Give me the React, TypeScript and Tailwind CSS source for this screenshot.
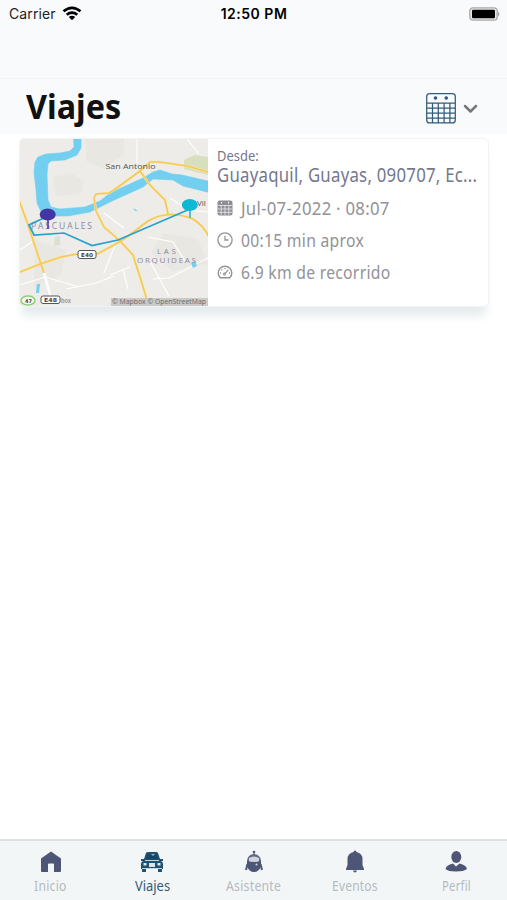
import { useLayoutEffect, useRef, useState } from "react";
import type { ReactNode } from "react";

// Condenses a line of text horizontally so that it occupies the given width.
function Fit({ width, className = "", children }: { width: number; className?: string; children: ReactNode }) {
  const ref = useRef<HTMLSpanElement>(null);
  const [scale, setScale] = useState(0.85);
  useLayoutEffect(() => {
    if (ref.current) setScale(width / ref.current.offsetWidth);
  }, [width]);
  return (
    <span className={`block shrink-0 whitespace-nowrap ${className}`} style={{ width }}>
      <span ref={ref} className="inline-block origin-left" style={{ transform: `scaleX(${scale})` }}>{children}</span>
    </span>
  );
}

function TripMap() {
  return (
    <svg viewBox="20 139 188 167" className="block h-[167px] w-[188px] shrink-0 rounded-l-[3px]">
      <rect x="20" y="139" width="188" height="167" fill="#edece8" />
      <g fill="#e9e7e2">
        <path d="M53 176l18-3 13 8-3 13-25 2zM86 139h38v15l-20 15-18-8zM163 233l35 6 10 25-35 7-22-18zM35 240l31 10-5 25-27 12z" />
      </g>
      <path d="M184 160l11-5 13 2v18l-24-6z" fill="#d8dfbd" />
      <path d="M55 237l5-1v9l-6 1z" fill="#dedfce" />
      <g fill="none" stroke="#fff" strokeWidth="1.1">
        <path d="M137 139v24M20 250l12-8M66 289l30-6 18-7M20 285l25-8 34 10M110 275l20-8M123 269l5 20M153 279l16-1 39-20M148 237l25 5 12 19M151 263l18 33M116 243l-12 30M170 198l18 12 20 2M104 213l20 15M187 139l12 15" />
      </g>
      <path
        d="M73.5 139L74 147L70 151L60 153L46 154L38 157L35 162L34 172L36 190L37 203L41 212L48 216L68 216L90 212L110 202L143 187L153 179L173 180L183 186L207 192H208V181L182 175L172 174L160 170L153 172L143 178L110 193L100 201L85 207L60 209L51 207L48 200L47 175L48 164L51 161L65 160L77 155L81 148V139Z"
        fill="#73cff0"
        stroke="#73cff0"
        strokeWidth=".6"
      />
      <path d="M37 284h3l-1 9h-3zM191 263l4-2 2 5-4 2zM133 208l5 3-3 0z" fill="#73cff0" />
      <path d="M44 273L51 298" stroke="#fff" strokeWidth="2.5" />
      <g fill="none" strokeLinejoin="round">
        <g stroke="#f8e7b0" strokeWidth="2.6">
          <path d="M19 200L27 222L44 273M20 272L40 264L61 257L77 254H97L114 245L127 237L148 221Q168 209 193 219Q204 226 209 237" />
          <path d="M208 172L187 166L160 162H150L140 171L114 190L109 193L96 194L94 198L96 211L104 227L120 241L133 255L140 277L147 300M140 171L150 185L165 200L168 214" />
        </g>
        <g stroke="#f5c954" strokeWidth="1.6">
          <path d="M19 200L27 222L44 273M20 272L40 264L61 257L77 254H97L114 245L127 237L148 221Q168 209 193 219Q204 226 209 237" />
          <path d="M208 172L187 166L160 162H150L140 171L114 190L109 193L96 194L94 198L96 211L104 227L120 241L133 255L140 277L147 300M140 171L150 185L165 200L168 214" />
        </g>
      </g>
      <g className="font-['Open_Sans',sans-serif] font-medium">
        <text x="105.500" y="169" fontSize="7.5" fill="#555" textLength="50" lengthAdjust="spacingAndGlyphs">San Antonio</text>
        <text x="31" y="229" fontSize="8.500" fill="#8a86a8" textLength="61">PASCUALES</text>
        <text x="157" y="254" fontSize="8" fill="#8a86a8" textLength="19">LAS</text>
        <text x="137" y="262.500" fontSize="8" fill="#8a86a8" textLength="59">ORQUIDEAS</text>
        <text x="197" y="206" fontSize="8" fill="#555">Vil</text>
      </g>
      <path d="M48 216L29 225L34 235L64 233L92 245.5L118 240L190 209" fill="none" stroke="#27a1ce" strokeWidth="1.7" />
      <path d="M48 218v11" stroke="#4934a1" strokeWidth="1.5" />
      <ellipse cx="47.7" cy="214.5" rx="8" ry="6" fill="#4435a5" />
      <path d="M190 209v9" stroke="#31b1c7" strokeWidth="1.5" />
      <ellipse cx="189.8" cy="205" rx="8" ry="6" fill="#11b8d3" />
      <g fill="#fff" stroke="#555" strokeWidth="1">
        <rect x="78" y="250.5" width="18" height="8" rx="2" />
        <rect x="41" y="296" width="19" height="7.5" rx="2" />
      </g>
      <ellipse cx="28" cy="300.5" rx="7" ry="4.5" fill="#f5faf1" stroke="#8ecf78" strokeWidth="1.5" />
      <g className="font-['DejaVu_Sans',sans-serif] font-bold" fontSize="5.5" fill="#444">
        <text x="81" y="256.7" textLength="12" lengthAdjust="spacingAndGlyphs">E40</text>
        <text x="44" y="302" textLength="13" lengthAdjust="spacingAndGlyphs">E48</text>
        <text x="25" y="302.5" fontSize="5">47</text>
      </g>
      <text x="61" y="302.5" fontSize="6" fill="#999" textLength="10" lengthAdjust="spacingAndGlyphs" className="font-['Inter',sans-serif] font-bold">box</text>
      <rect x="111" y="298" width="97" height="8" fill="#cbcac7" />
      <text x="112" y="304.4" fontSize="7" fill="#686868" textLength="94" lengthAdjust="spacingAndGlyphs" className="font-['Open_Sans',sans-serif]">© Mapbox © OpenStreetMap</text>
    </svg>
  );
}

function CalendarIcon() {
  return (
    <svg viewBox="0 0 30 31" className="h-[31px] w-[30px]" fill="none" stroke="#315c78" strokeWidth="1.25">
      <rect x=".7" y=".7" width="28.6" height="29.2" rx="3" />
      <path d="M1 10h28M1 15h28M1 20h28M1 25h28M6.5 10v20M12.3 10v20M18.1 10v20M23.9 10v20" />
      <circle cx="9.5" cy="5" r="1.2" fill="#315c78" />
      <circle cx="20.2" cy="5" r="1.2" fill="#315c78" />
    </svg>
  );
}

function Detail({ icon, children, width }: { icon: ReactNode; children: ReactNode; width: number }) {
  return (
    <div className="flex h-8 items-center text-[#929297]">
      <svg viewBox="0 0 16 16" className="h-4 w-4 shrink-0" fill="none" stroke="currentColor">{icon}</svg>
      <Fit width={width} className="ml-2 text-[17.5px] leading-5 tracking-[0.3px]">{children}</Fit>
    </div>
  );
}

function Tab({ label, icon, active = false, width }: { label: string; icon: ReactNode; active?: boolean; width: number }) {
  return (
    <div className={`flex flex-1 flex-col items-center pt-2 ${active ? "text-[#315b76]" : "text-[#b3bac0]"}`}>
      <svg viewBox="0 0 28 26" className="h-[26px] w-7">{icon}</svg>
      <Fit width={width} className={`mt-px text-[14px] leading-5 ${active ? "" : "tracking-[0.3px]"}`}>{label}</Fit>
    </div>
  );
}

export default function App() {
  return (
    <main className="flex h-[900px] w-[507px] flex-col overflow-hidden bg-white font-['Noto_Sans',sans-serif]">
      <header className="bg-[#f9fafc]">
        <div className="grid h-[79px] grid-cols-3 items-start border-b border-[#f1f3f5] pl-2 pr-[7px] pt-1 font-['Inter',sans-serif] text-[14px] leading-5 text-[#222]">
          <div className="flex items-center gap-[6px] pl-px">
            <span className="tracking-[0.1px]">Carrier</span>
            <svg viewBox="0 0 20 15" className="-mt-0.5 h-[15px] w-5" fill="none" stroke="#000" strokeWidth="2.7">
              <path d="M1.5 5.3Q10-1.7 18.5 5.3M4.7 8.7Q10 4.5 15.3 8.7" />
              <path d="M6.8 11Q10 8.6 13.2 11L10 14.3z" fill="#000" stroke="none" />
            </svg>
          </div>
          <span className="text-center font-semibold tracking-[0.5px] text-black">12:50 PM</span>
          <div className="flex h-[19px] items-center justify-end">
            <svg viewBox="0 0 31 14" className="h-[14px] w-[31px]">
              <rect x=".8" y=".8" width="27.4" height="12.4" rx="3.2" fill="#e7e7e7" stroke="#aaa" strokeWidth="1.3" />
              <rect x="3" y="2.7" width="23" height="8.6" rx="1.3" />
              <path d="M29 4.5Q32 7 29 9.5z" fill="#aaa" />
            </svg>
          </div>
        </div>
        <div className="flex h-[55px] items-center justify-between pl-[26px] pr-[29px]">
          <h1 className="pb-0.5 text-[34px] font-bold leading-[50px] text-[#111]"><Fit width={95}>Viajes</Fit></h1>
          <div className="flex items-center gap-[7px] pt-1">
            <CalendarIcon />
            <svg viewBox="0 0 15 10" className="h-[10px] w-[15px]" fill="none" stroke="#77777b" strokeWidth="2.5" strokeLinecap="round" strokeLinejoin="round"><path d="M2 2l5.5 5.5L13 2" /></svg>
          </div>
        </div>
      </header>
      <section className="flex-1 pl-[19px] pr-[18px] pt-1">
        <article className="flex h-[169px] rounded-[5px] border border-[#f0f2f4] bg-white shadow-[0_12px_10px_-3px_#e5ecee]">
          <TripMap />
          <div className="min-w-0 flex-1 pl-[9px] pt-[7px]">
            <p className="text-[14.5px] leading-[18px] text-[#74778e]"><Fit width={42}>Desde:</Fit></p>
            <p className="mb-[6px] text-[19px] leading-[22px] tracking-[0.3px] text-[#74778e]"><Fit width={260}>Guayaquil, Guayas, 090707, Ec...</Fit></p>
            <Detail width={149} icon={<><rect x=".5" y=".5" width="15" height="15" rx="2" fill="#8e8e93" stroke="none" /><path d="M1 5.5h14M1 9h14M1 12.3h14M4.2 5v10M8 5v10M11.8 5v10" stroke="#ececef" strokeWidth=".8" /><path d="M4.5 2v1.5M11.5 2v1.5" stroke="white" /></>}>Jul-07-2022 · 08:07</Detail>
            <Detail width={123} icon={<><circle cx="8" cy="8" r="7.1" strokeWidth="1.3" /><path d="M8 3.8V8h3.5" strokeWidth="1.3" /></>}>00:15 min aprox</Detail>
            <Detail width={149} icon={<><path d="M3.2 13.8A6.8 6.8 0 1112.8 13.8z" strokeWidth="1.4" strokeLinejoin="round" /><path d="M7.4 10.3L11.2 5.8M3 9h1M12 9h1M4.4 5.6l.8.7M8 4v1" strokeWidth="1.3" /><circle cx="7.4" cy="10.1" r="1.1" /></>}>6.9 km de recorrido</Detail>
          </div>
        </article>
      </section>
      <nav className="flex h-[61px] border-t-2 border-[#dedfe1] bg-[#f3f6f7]">
        <Tab label="Inicio" width={33} icon={<path d="M14 2.5L24 9.5V22q0 1-1 1h-6v-7.5q0-1-1-1h-4q-1 0-1 1V23H5q-1 0-1-1V9.5z" fill="#4e5678" />} />
        <Tab active label="Viajes" width={35} icon={<><path d="M6 10L8 4q.5-1 2-1h8q1.500 0 2 1l2 6h3v2h-2q2 1 2 3v5h-1v3h-4v-3H8v3H4v-3H3v-5q0-2 2-3H3v-2z" fill="#20516f" /><path d="M8 10.500l1-5h10l1 5z" fill="#174764" /><path d="M13 5h4l-2 2z" fill="#9eb3c1" /><path d="M5.500 14h3v2.500h-3zM19.500 14h3v2.500h-3zM11 14h6v4h-6z" fill="#dbe5ea" /><path d="M4 19.500h20M7 11.500h14" stroke="#f3f6f7" strokeWidth=".8" /></>} />
        <Tab label="Asistente" width={55} icon={<><path d="M14 2v4" stroke="#4e5678" /><circle cx="14" cy="3" r="1.3" fill="#4e5678" /><ellipse cx="14" cy="12" rx="7" ry="7" fill="#626985" /><path d="M9 9q5-3 10 0v4H9z" fill="#ced3dc" /><path d="M7 11.500q7 3 14 0v5.500q-2 6-7 6t-7-6z" fill="#4e5678" /><path d="M7.500 15l-1.500 6M20.500 15l1.500 6" stroke="#4e5678" strokeWidth="2" /><circle cx="16.500" cy="15.500" r="1" fill="#d5dae1" /></>} />
        <Tab label="Eventos" width={46} icon={<path d="M12.500 3q0-1.500 1.500-1.500T15.500 3q6 1.500 6 7v6l1.500 4v1H5v-1l1.500-4v-6q0-5.500 6-7M12 21.500h4q-.5 2-2 2t-2-2z" fill="#4e5678" />} />
        <Tab label="Perfil" width={29} icon={<><ellipse cx="14.300" cy="8" rx="5" ry="6" fill="#4e5678" /><path d="M11 14.500l3 3 3.500-3q7 1.500 7.500 5.500-3 2.500-11 2.500T3.500 20q.5-4 7.500-5.500z" fill="#4e5678" /></>} />
      </nav>
    </main>
  );
}
